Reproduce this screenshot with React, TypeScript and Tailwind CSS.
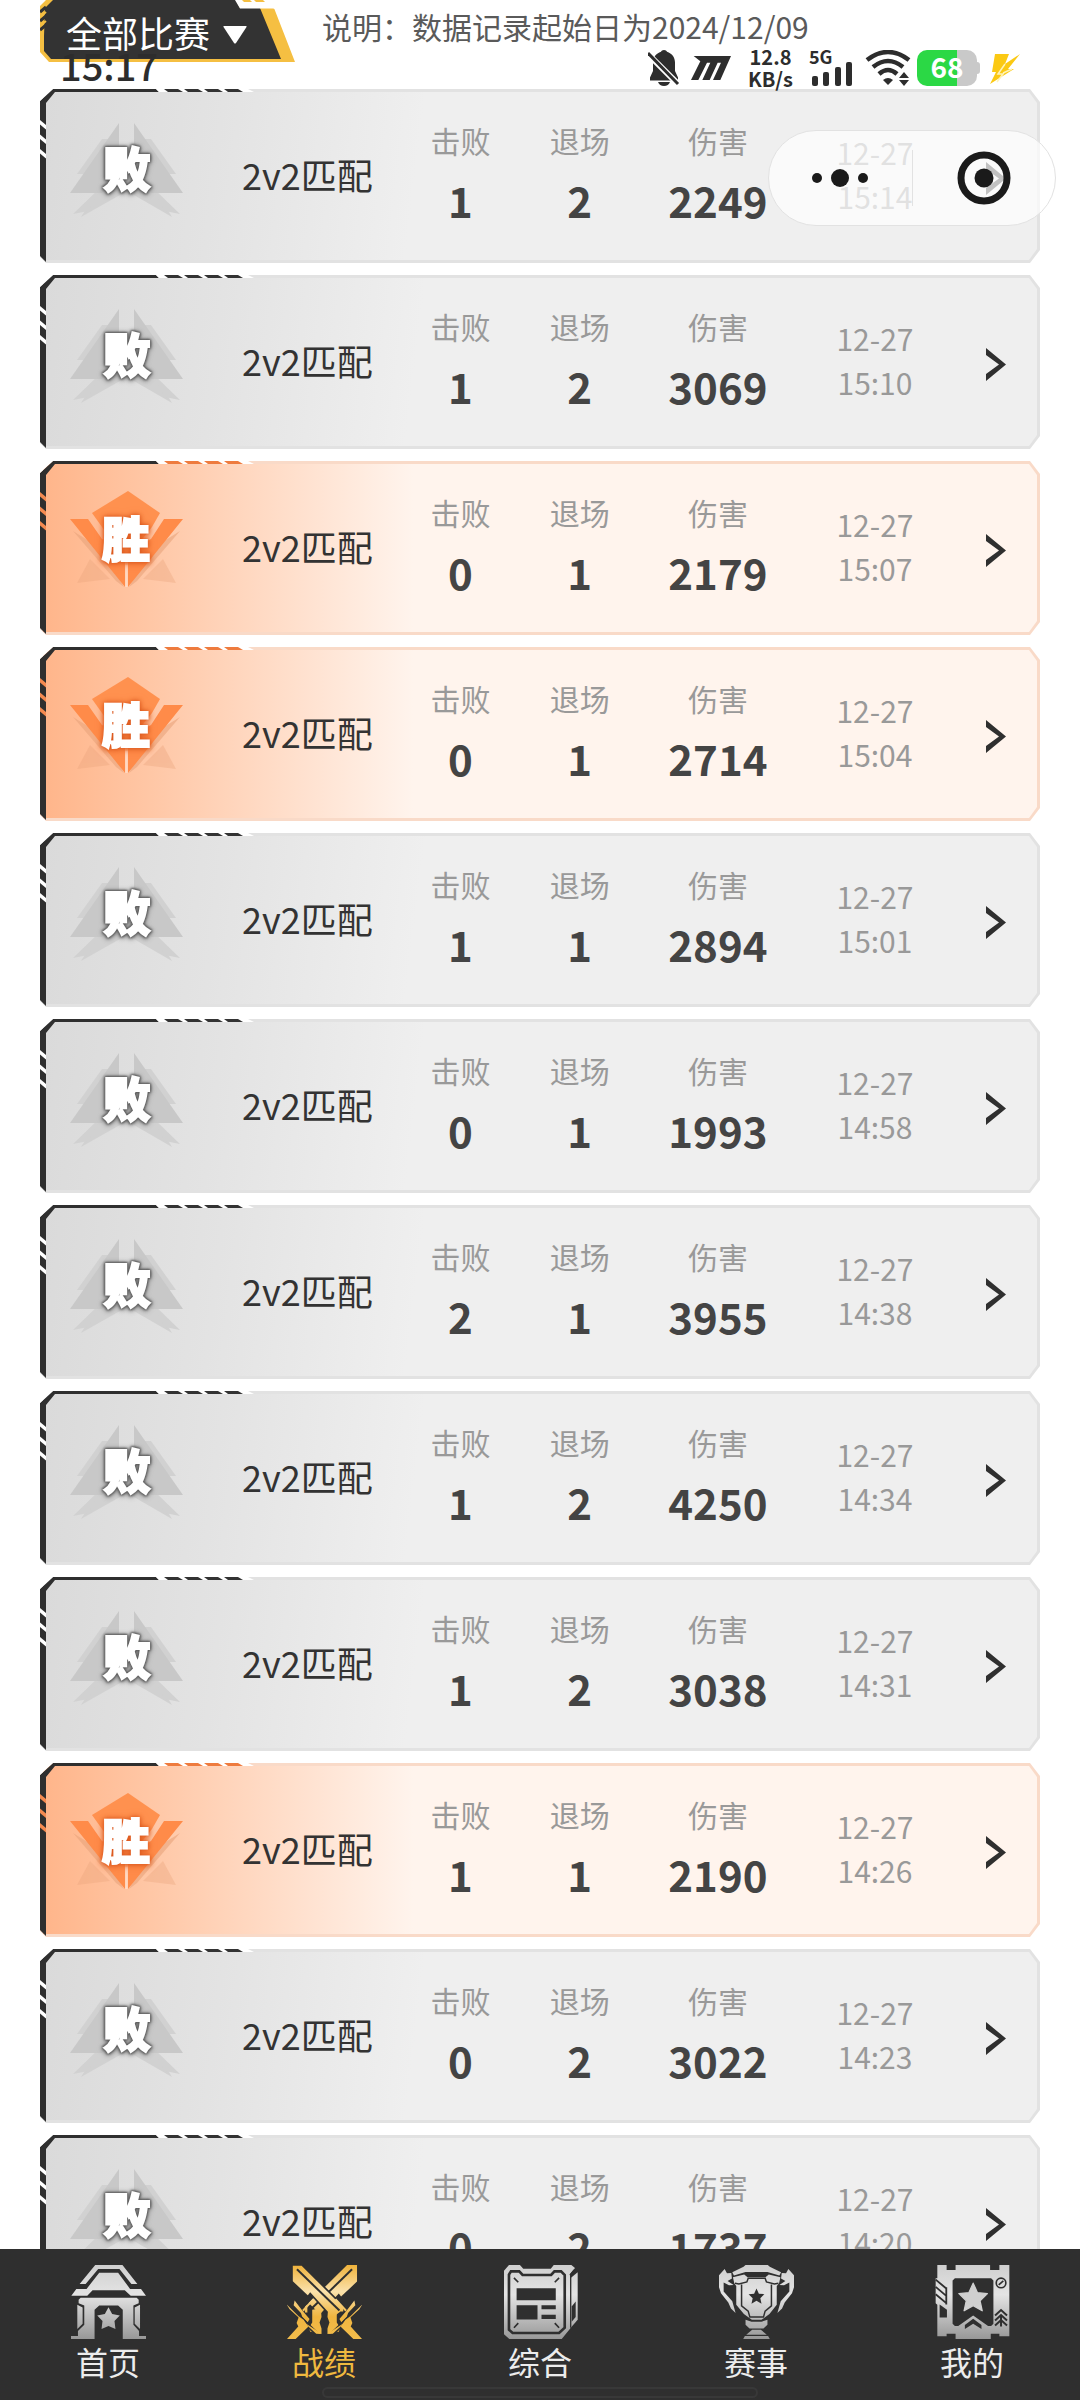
import React from 'react';
import clsx from 'clsx';

interface Match {
  id: number;
  win: boolean;
  mode: string;
  kills: number;
  exits: number;
  damage: number;
  date: string;
  time: string;
}

const MATCHES: Match[] = [
  { id: 1, win: false, mode: '2v2匹配', kills: 1, exits: 2, damage: 2249, date: '12-27', time: '15:14' },
  { id: 2, win: false, mode: '2v2匹配', kills: 1, exits: 2, damage: 3069, date: '12-27', time: '15:10' },
  { id: 3, win: true, mode: '2v2匹配', kills: 0, exits: 1, damage: 2179, date: '12-27', time: '15:07' },
  { id: 4, win: true, mode: '2v2匹配', kills: 0, exits: 1, damage: 2714, date: '12-27', time: '15:04' },
  { id: 5, win: false, mode: '2v2匹配', kills: 1, exits: 1, damage: 2894, date: '12-27', time: '15:01' },
  { id: 6, win: false, mode: '2v2匹配', kills: 0, exits: 1, damage: 1993, date: '12-27', time: '14:58' },
  { id: 7, win: false, mode: '2v2匹配', kills: 2, exits: 1, damage: 3955, date: '12-27', time: '14:38' },
  { id: 8, win: false, mode: '2v2匹配', kills: 1, exits: 2, damage: 4250, date: '12-27', time: '14:34' },
  { id: 9, win: false, mode: '2v2匹配', kills: 1, exits: 2, damage: 3038, date: '12-27', time: '14:31' },
  { id: 10, win: true, mode: '2v2匹配', kills: 1, exits: 1, damage: 2190, date: '12-27', time: '14:26' },
  { id: 11, win: false, mode: '2v2匹配', kills: 0, exits: 2, damage: 3022, date: '12-27', time: '14:23' },
  { id: 12, win: false, mode: '2v2匹配', kills: 0, exits: 2, damage: 1737, date: '12-27', time: '14:20' },
];

const STAR = 'M0,-34 L10,-12 L33,-10 L16,7 L21,30 L0,18 L-21,30 L-16,7 L-33,-10 L-10,-12 Z';

/* ---------- status bar ---------- */

const StatusBar: React.FC = () => (
  <div className="pointer-events-none absolute inset-x-0 top-12 flex h-10 items-center justify-between pl-[60px] pr-[60px] text-[#2d2d2d]">
    <span className="pb-1.5 text-[38px] font-medium leading-10">15:17</span>
    <div className="flex h-9 items-start">
      <svg className="mr-2.5 h-9 w-8" viewBox="0 0 32 36" fill="currentColor">
        <path d="M16 0c1.600 0 2.500.8 3 1.800 5 1.700 8 5.700 8 10.700v8.500l3 6.500v3H2v-3l3-6.500v-8.500C5 7.500 8 3.500 13 1.800 13.500.8 14.400 0 16 0z" />
        <path d="M10 32h12c-1 2.500-3 4-6 4s-5-1.500-6-4z" />
        <path d="M1 5l29 29" stroke="white" strokeWidth="6" />
        <path d="M0 3l30 31" stroke="currentColor" strokeWidth="3" />
      </svg>
      <svg className="mr-4 mt-1.5 h-6 w-[42px]" viewBox="0 0 120 72" fill="currentColor">
        <path d="M8,0 H120 L88,72 H66 L90,20 H80 L56,72 H34 L58,20 H48 L22,72 H0 L28,16 Z" />
      </svg>
      <div className="-mt-1 mr-4 flex flex-col items-center text-xl font-bold leading-[22px]">
        <span>12.8</span>
        <span>KB/s</span>
      </div>
      <div className="mr-3 flex flex-col">
        <span className="h-3 text-lg font-bold leading-3">5G</span>
        <svg className="h-6 w-11" viewBox="0 0 44 24" fill="currentColor">
          <rect x="3" y="14" width="6" height="10" rx="2" />
          <rect x="14" y="10" width="6" height="14" rx="2" />
          <rect x="26" y="5" width="6" height="19" rx="2" />
          <rect x="37" y="0" width="6" height="24" rx="2" />
        </svg>
      </div>
      <svg className="mr-1.5 h-9 w-[46px]" viewBox="0 0 46 36" fill="none" stroke="currentColor">
        <path d="M2 10Q23 -6 44 10" strokeWidth="4.500" />
        <path d="M8 17Q23 5 38 17" strokeWidth="4.500" />
        <path d="M14 24Q23 16 32 24" strokeWidth="4.500" />
        <path d="M18 30Q23 26 28 30L23 35z" fill="currentColor" stroke="none" />
        <path d="M34 28l5-6 5 6zM34 30l5 6 5-6z" fill="currentColor" stroke="none" />
      </svg>
      <div className="flex items-center">
        <div className="flex h-9 w-[60px] items-center justify-center rounded-[10px] bg-[linear-gradient(90deg,#2bd845_66%,#c9c9c9_66%)] pb-1">
          <span className="text-[28px] font-bold leading-9 text-white">68</span>
        </div>
        <span className="mr-2.5 h-3 w-[3px] rounded-r bg-[#c9c9c9]" />
      </div>
      <svg className="mt-1 h-[30px] w-[30px]" viewBox="0 0 30 30" fill="#fbc913">
        <path d="M5 0h14l-4 10 15-10-12 15h6L0 30l6-12H2z" />
        <path d="M15 10l-7 10h5l-6 8M13 19l9-4" stroke="#fff3b8" strokeWidth="1.500" fill="none" />
      </svg>
    </div>
  </div>
);

/* ---------- floating capsule ---------- */

const Capsule: React.FC = () => (
  <div className="absolute right-6 top-[130px] flex h-24 w-[288px] items-center rounded-full border border-[#e2e2e2] bg-white/70">
    <button type="button" aria-label="更多" className="flex h-14 flex-1 items-center justify-center border-r border-[#e2e2e2]">
      <svg className="h-5 w-14" viewBox="0 0 56 20" fill="#1a1a1a">
        <circle cx="5" cy="10" r="5" />
        <circle cx="28" cy="10" r="9" />
        <circle cx="51" cy="10" r="5" />
      </svg>
    </button>
    <button type="button" aria-label="关闭" className="flex h-14 flex-1 items-center justify-center">
      <svg className="h-[54px] w-[54px]" viewBox="0 0 54 54">
        <circle cx="27" cy="27" r="23" fill="none" stroke="#1a1a1a" strokeWidth="7" />
        <circle cx="27" cy="27" r="9.500" fill="#1a1a1a" />
      </svg>
    </button>
  </div>
);

/* ---------- header ---------- */

const Header: React.FC = () => (
  <header className="flex h-[77px] shrink-0 items-start gap-[26px]">
    <div className="relative h-[62px] w-64 shrink-0">
      <svg className="absolute left-0 top-0 h-[62px] w-64" viewBox="0 0 256 62">
        <path d="M0 6L6 0H200V8H234L255 62H9L0 52z" fill="#f5bf42" />
        <path d="M5 8L13 0H196L200 8H220L241 59H11L4 51V36z" fill="#333333" />
        <path d="M195 0H256V9H235L233 8.500H200z" fill="#ffffff" />
        <path d="M202 0h8l2 2h-8zM214 0h9l2 2h-9z" fill="#f5bf42" />
        <path d="M0 12l6-5M0 21l6-5M0 30l6-5" stroke="#333333" strokeWidth="3" />
        <path d="M0 17l6-5M0 26l6-5" stroke="#f5bf42" strokeWidth="2" />
      </svg>
      <select
        aria-label="比赛类型"
        className="relative h-[62px] w-56 appearance-none bg-transparent pb-px pl-[26px] pt-0.5 text-4xl text-white outline-none"
        defaultValue="all"
      >
        <option value="all">全部比赛</option>
      </select>
      <svg className="pointer-events-none absolute left-[183px] top-[26px] h-[18px] w-6" viewBox="0 0 24 18" fill="#fff">
        <path d="M1 0H23Q24 0 23.500 1L13 17Q12 18 11 17L.5 1Q0 0 1 0z" />
      </svg>
    </div>
    <p className="whitespace-nowrap pt-1 text-3xl leading-11 text-[#5a5a5a]">说明：数据记录起始日为2024/12/09</p>
  </header>
);

/* ---------- match card ---------- */

const WinBadge: React.FC = () => (
  <svg className="h-[100px] w-[116px]" viewBox="29 29 116 100" role="img">
    <g fill="#e9a47c" opacity="0.6">
      <path d="M33 70L76 120 84 126 62 88z" />
      <path d="M140 70L97 120 89 126 111 88z" />
      <path d="M37 122L50 98 70 118z" opacity="0.6" />
      <path d="M136 122L123 98 103 118z" opacity="0.6" />
    </g>
    <path d="M88 30L120 52 112 66 86 98 62 66 52 52z" fill="#ff914f" />
    <path d="M30 58H48L62 78 85 90V126z" fill="#ff8b49" />
    <path d="M143 58H124L111 78 88 90V126z" fill="#ff8b49" />
    <path d="M86.500 104V126" stroke="#ffd9c2" strokeWidth="2.500" />
    <text
      x="86"
      y="96"
      textAnchor="middle"
      fontSize="48"
      className="fill-white stroke-white stroke-[2px] font-black [filter:drop-shadow(0_0_2px_#d9541a)_drop-shadow(0_1px_3px_#e86a2c)]"
    >
      胜
    </text>
  </svg>
);

const LoseBadge: React.FC = () => (
  <svg className="h-[100px] w-[116px]" viewBox="29 29 116 100" role="img">
    <g fill="#d1d1d1">
      <path d="M62 50L37 85H52L76 50z" />
      <path d="M111 50L136 85H121L97 50z" />
      <path d="M64 92L41 128 87 102 82 92z" />
      <path d="M110 92L132 128 87 102 92 92z" />
      <path d="M110 96L140 125 125 122z" />
      <path d="M63 96L33 125 48 122z" />
    </g>
    <path d="M79 34L30 104H62L79 80z" fill="#c8c8c8" />
    <path d="M94 34L143 104H111L94 80z" fill="#c8c8c8" />
    <text
      x="87"
      y="98"
      textAnchor="middle"
      fontSize="48"
      className="fill-white stroke-white stroke-[2px] font-black [filter:drop-shadow(0_0_1px_#555)_drop-shadow(0_0_1px_#666)_drop-shadow(0_0_1px_#777)_drop-shadow(0_1px_2px_#999)]"
    >
      败
    </text>
  </svg>
);

// dark corner bracket with the slanted ticks along the top and left edges
const CardTrim: React.FC<{ win: boolean }> = ({ win }) => {
  const tick = win ? '#ee7b3e' : '#333333';
  const cut = win ? '#f58a50' : '#ffffff';
  return (
    <svg className="pointer-events-none absolute left-0 top-0 h-[174px] w-[220px]" viewBox="0 0 220 174">
      <path d="M0 12L13 0H116L119 3H15L6 14V173L0 167z" fill="#2f2f2f" />
      <path d="M116 0H208L214 3H119z" fill="#ffffff" />
      {[124, 144, 164, 184].map(x => (
        <path key={x} d={`M${x} 0h14l5 3h-15z`} fill={tick} />
      ))}
      {[31, 45.5, 60].map(y => (
        <path key={y} d={`M0 ${y}l6 5v4.500l-6-5z`} fill={cut} />
      ))}
    </svg>
  );
};

const Stat: React.FC<{ label: string; value: number }> = ({ label, value }) => (
  <div className="flex flex-col items-center gap-2">
    <dt className="text-3xl leading-11 text-[#999999]">{label}</dt>
    <dd className="text-[42px] font-bold leading-[60px] text-[#444444]">{value}</dd>
  </div>
);

const MatchCard: React.FC<{ match: Match }> = ({ match }) => (
  <a
    href="#match"
    className={clsx(
      'relative block p-[3px] [clip-path:polygon(0_12px,13px_0,calc(100%-10px)_0,100%_13px,100%_calc(100%-13px),calc(100%-10px)_100%,6px_100%,0_calc(100%-6px))]',
      match.win ? 'bg-[#f9dac8]' : 'bg-[#e2e2e2]'
    )}
  >
    <div
      className={clsx(
        'grid h-[168px] grid-cols-[170fr_192fr_116fr_124fr_154fr_162fr_82fr] items-center pb-1 [clip-path:polygon(0_0,calc(100%-8px)_0,100%_11px,100%_calc(100%-11px),calc(100%-8px)_100%,0_100%)]',
        match.win
          ? 'bg-[linear-gradient(90deg,#ffb58a_0,#ffc9a9_120px,#fff4ed_370px)]'
          : 'bg-[linear-gradient(97deg,#dadada_0,#e3e3e3_180px,#efefef_380px)]'
      )}
    >
      <div className="flex justify-center pb-3">{match.win ? <WinBadge /> : <LoseBadge />}</div>
      <span className="whitespace-nowrap text-center text-4xl text-[#333333]">{match.mode}</span>
      <dl className="col-span-3 grid grid-cols-subgrid">
        <Stat label="击败" value={match.kills} />
        <Stat label="退场" value={match.exits} />
        <Stat label="伤害" value={match.damage} />
      </dl>
      <div className="flex flex-col items-center text-3xl leading-11 text-[#999999]">
        <span>{match.date}</span>
        <span>{match.time}</span>
      </div>
      <svg className="mt-2 h-[33px] w-5 justify-self-center" viewBox="0 0 20 33" fill="#2f2f2f">
        <path d="M0 0L20 16.500 0 33V26L13 16.500 0 7z" />
      </svg>
    </div>
    <CardTrim win={match.win} />
  </a>
);

/* ---------- bottom navigation ---------- */

const Gradients: React.FC = () => (
  <svg className="absolute h-0 w-0" aria-hidden="true">
    <defs>
      <linearGradient id="silver" gradientUnits="userSpaceOnUse" x1="0" y1="15" x2="0" y2="238">
        <stop offset="0" stopColor="#cfcfcf" />
        <stop offset="0.4" stopColor="#e4e4e4" />
        <stop offset="1" stopColor="#989898" />
      </linearGradient>
      <linearGradient id="gold" gradientUnits="userSpaceOnUse" x1="0" y1="15" x2="0" y2="238">
        <stop offset="0" stopColor="#efb23a" />
        <stop offset="0.36" stopColor="#fbe2ac" />
        <stop offset="0.7" stopColor="#f0b53f" />
        <stop offset="1" stopColor="#f3bd4c" />
      </linearGradient>
    </defs>
  </svg>
);

const HomeIcon: React.FC = () => (
  <svg className="h-[74px] w-[75px]" viewBox="31 15 226 223" fill="url(#silver)">
    <path d="M57 72L104 15H186L231 72H213L177 27H113L75 72z" />
    <path d="M116 38H173L209 87H242L257 108H211L193 91H96L80 108H32L47 87H78z" />
    <path d="M60 114H229L235 120V130L219 137V195L236 214V229H257V238H187V150L173 137H116L102 150V238H31V229H52V214L71 195V137L54 130V120z" />
    <path d="M50 135L66 143V192L50 208zM239 135L223 143V192L239 208z" />
    <path d="M144 142L155 163 178 167 162 184 165 208 144 199 123 208 126 184 110 167 133 163z" />
  </svg>
);

const BattleIcon: React.FC = () => {
  const blade = 'M49 15H79L206 141V158H196L172 176 104 101 97 110 49 65z';
  return (
    <svg className="h-[74px] w-[75px]" viewBox="34 15 226 223" fill="url(#gold)">
      <g transform="matrix(-1 0 0 1 294 0)">
        <path d={blade} />
        <path d="M64 28L192 152" stroke="#2f2f2f" strokeWidth="6" />
      </g>
      <path d="M95 125L145 175 147 238 96 190z" fill="#2f2f2f" />
      <path d="M201 125L147 175V238L200 190z" fill="#2f2f2f" />
      <path d={blade} stroke="#2f2f2f" strokeWidth="5" />
      <path d="M64 28L192 152" stroke="#2f2f2f" strokeWidth="6" />
      {[1, -1].map(s => (
        <g key={s} transform={s === 1 ? undefined : 'matrix(-1 0 0 1 294 0)'}>
          <path d="M158 145L184 150V188L194 204 190 216 156 222V206L162 188 156 172z" />
          <path d="M180 118L212 153" stroke="url(#gold)" strokeWidth="6" />
          <path d="M237 122L240 136 218 160 214 172 198 188 192 178 214 152z" />
          <path d="M259 136L170 223" stroke="#2f2f2f" strokeWidth="12" />
          <path d="M261 134L252 148 172 222 155 223 202 192z" />
          <path d="M210 180L224 170 231 190 226 200 260 238H234L196 201z" />
        </g>
      ))}
    </svg>
  );
};

const NewsIcon: React.FC = () => (
  <svg className="h-[74px] w-[75px]" viewBox="37 15 226 223" fill="url(#silver)">
    <path d="M55 15H88L98 26H181L190 15H243L254 24 239 42V207L214 238H56L40 224V32z" />
    <path d="M262 37V180L238 208V190L240 55z" />
    <path d="M256 125V172L244 186V140z" fill="#2f2f2f" />
    <path d="M239 46L252 30" stroke="#2f2f2f" strokeWidth="5" />
    <path d="M241 48V204" stroke="#2f2f2f" strokeWidth="4" />
    <path d="M61 34H86L96 45H182L192 34H212L223 45V204L206 220H66L55 210V44z" fill="none" stroke="#2f2f2f" strokeWidth="8" />
    <path d="M78 85H196V121H78zM78 136H141V179H78zM153 136H196V148H153zM153 165H196V178H153z" fill="#2f2f2f" />
    <path d="M70 54L83 67M206 54L193 67M70 204L83 190M206 204L193 190" stroke="#2f2f2f" strokeWidth="5" />
  </svg>
);

const TrophyIcon: React.FC = () => (
  <svg className="h-[74px] w-[75px]" viewBox="40 15 226 223" fill="url(#silver)">
    <path d="M80 37L114 20 120 15H187L193 20 227 37 222 47 186 36H120L85 47z" />
    <path d="M82 52L116 44 126 52H180L190 44 225 52 221 70 214 78V135L192 163 168 180H139L115 163 92 135V78L86 70z" />
    <path
      d="M88 70L100 72 124 66 128 55H179L183 66 207 72 219 70M108 74V138L128 154 133 172H174L179 154 198 138V74"
      fill="none"
      stroke="#2f2f2f"
      strokeWidth="4.500"
    />
    <path d={STAR} transform="translate(153 110) scale(0.72)" fill="#2f2f2f" />
    {[1, -1].map(s => (
      <path
        key={s}
        transform={s === 1 ? undefined : 'matrix(-1 0 0 1 306 0)'}
        d="M40 46L57 27 64 40 77 39 79 56 66 63 84 75 70 76 54 68V95L80 124 90 160 76 146 68 128 46 100 40 82z"
      />
    ))}
    <path d="M120 180L138 186H168L186 180V195L174 206H132L120 195z" />
    <path d="M140 210H166L184 225H122zM113 238L118 229H188L193 238z" />
  </svg>
);

const MineIcon: React.FC = () => (
  <svg className="h-[74px] w-[75px]" viewBox="688 15 226 223" fill="url(#silver)">
    <path d="M695 15H723V30H750V15H854V30H882V15H912V230H882V222H856V238H750V222H723V230H695V135L690 130V55H695z" />
    <path d="M748 55H857L864 62V192L857 199H848L803 167 758 199H748L741 192V62z" fill="#2f2f2f" />
    <path d={STAR} transform="translate(803 114) scale(1.300)" stroke="url(#silver)" strokeWidth="3" strokeLinejoin="round" />
    <path d="M778 196L803 177 828 196V208L803 192 778 208z" fill="#2f2f2f" />
    <path d="M690 59L722 86M690 81L722 108M690 103L722 130M722 82V134" stroke="#2f2f2f" strokeWidth="5.500" fill="none" />
    <path d="M702 134L724 150V173H702z" fill="#2f2f2f" />
    <circle cx="887" cy="69" r="14.500" fill="none" stroke="#2f2f2f" strokeWidth="5" />
    <path d="M880 75L894 63" stroke="#2f2f2f" strokeWidth="5" />
    <path d="M869 167L887 151 905 167M869 182L887 166 905 182M869 197L887 181 905 197M887 170V200" stroke="#2f2f2f" strokeWidth="6" fill="none" />
  </svg>
);

const NAV_ITEMS = [
  { label: '首页', Icon: HomeIcon, active: false },
  { label: '战绩', Icon: BattleIcon, active: true },
  { label: '综合', Icon: NewsIcon, active: false },
  { label: '赛事', Icon: TrophyIcon, active: false },
  { label: '我的', Icon: MineIcon, active: false },
];

const BottomNav: React.FC = () => (
  <nav className="relative grid shrink-0 grid-cols-5 bg-[#2f2f2f] pb-4 pt-4">
    <Gradients />
    {NAV_ITEMS.map(({ label, Icon, active }) => (
      <a
        key={label}
        href="#nav"
        className={clsx('flex flex-col items-center text-[32px] leading-[45px]', active ? 'text-[#efb93f]' : 'text-[#ececec]')}
      >
        <Icon />
        <span>{label}</span>
      </a>
    ))}
    <span className="absolute bottom-0.5 left-1/2 h-[11px] w-[436px] -translate-x-1/2 rounded-full border-2 border-[#383838]" />
  </nav>
);

const App: React.FC = () => {
  return (
    <div className="relative flex h-screen flex-col overflow-hidden bg-white font-['Noto_Sans_CJK_SC',sans-serif]">
      <main className="flex min-h-0 flex-1 flex-col overflow-hidden px-10">
        <Header />
        <ul className="flex flex-col gap-3 pt-3">
          {MATCHES.map(match => (
            <li key={match.id}>
              <MatchCard match={match} />
            </li>
          ))}
        </ul>
      </main>
      <BottomNav />
      <StatusBar />
      <Capsule />
    </div>
  );
};

export default App;
